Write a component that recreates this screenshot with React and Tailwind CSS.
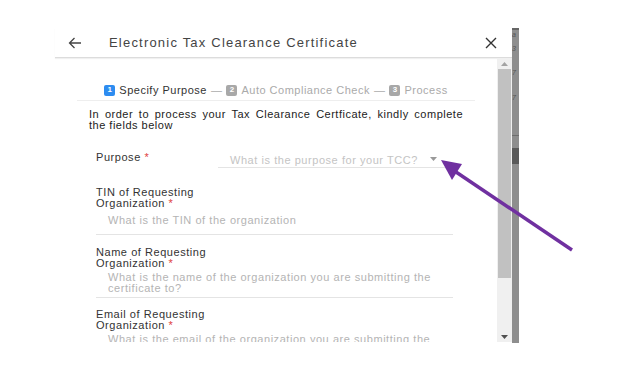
import React from "react";

const F = { fontFamily: '"Liberation Sans", Arial, sans-serif' };

function Badge({ n, active }) {
  return (
    <span
      className={`inline-flex items-center justify-center w-[11px] h-[11px] rounded-[2px] text-[8px] font-bold text-white leading-none tracking-normal ${
        active ? "bg-[#2d8cf0]" : "bg-[#a8a8a8]"
      }`}
    >
      {n}
    </span>
  );
}

function Label({ lines }) {
  return (
    <div className="text-[11px] leading-[11px] tracking-[0.55px] text-[#333]">
      {lines.map((l, i) => (
        <div key={i}>
          {l}
          {i === lines.length - 1 && <span className="text-[#e04040]"> *</span>}
        </div>
      ))}
    </div>
  );
}

export default function App() {
  return (
    <div className="relative w-[617px] h-[392px] bg-white overflow-hidden" style={F}>
      <div className="flex pl-[55px] pt-[28px]">
        <div className="w-[457px] flex flex-col">
          <div className="h-[30px] flex items-center border-b border-[#dcdcdc] shadow-[0_1px_1px_rgba(0,0,0,0.06)]">
            <svg className="ml-[13px]" width="14" height="12" viewBox="0 0 14 12">
              <path d="M13 6H1.5M6.5 1L1.5 6l5 5" fill="none" stroke="#444" strokeWidth="1.3" />
            </svg>
            <span className="ml-[27px] text-[13px] tracking-[1.2px] text-[#444]">Electronic Tax Clearance Certificate</span>
            <svg className="ml-auto mr-[15px]" width="12" height="12" viewBox="0 0 12 12">
              <path d="M1 1l10 10M11 1L1 11" stroke="#333" strokeWidth="1.4" />
            </svg>
          </div>
          <div className="flex h-[284px]">
            <div className="w-[442px] overflow-hidden">
              <div className="mx-[22px] mt-[26px] pb-[4px] border-b border-[#eeeeee] flex items-center justify-center gap-[4px] text-[11px] leading-[12px] tracking-[0.5px]">
                <Badge n="1" active />
                <span className="text-[#333]">Specify Purpose</span>
                <span className="text-[#aaa]">—</span>
                <Badge n="2" />
                <span className="text-[#aaa]">Auto Compliance Check</span>
                <span className="text-[#aaa]">—</span>
                <Badge n="3" />
                <span className="text-[#aaa]">Process</span>
              </div>
              <p className="mx-[34px] mt-[8px] text-[11px] leading-[11px] tracking-[0.5px] text-[#222] text-justify [text-align-last:left]">
                In order to process your Tax Clearance Certficate, kindly complete the fields below
              </p>
              <div className="ml-[41px] mr-[44px] mt-[20px]">
                <div className="flex">
                  <div className="w-[122px] pt-[1px]">
                    <Label lines={["Purpose"]} />
                  </div>
                  <div className="flex-1 mr-[8px] border-b border-[#e4e4e4] h-[17px] flex items-start pl-[12px] pr-[8px] text-[11px] leading-[12px] tracking-[0.55px] text-[#c4c4c4] pt-[3px]">
                    <span>What is the purpose for your TCC?</span>
                    <svg className="ml-auto mt-[3px]" width="7" height="4" viewBox="0 0 7 4">
                      <path d="M0 0h7L3.5 4z" fill="#999" />
                    </svg>
                  </div>
                </div>
                <div className="mt-[19px]">
                  <Label lines={["TIN of Requesting", "Organization"]} />
                  <div className="mt-[6px] pl-[12px] pb-[8px] border-b border-[#e4e4e4] text-[11px] leading-[11px] tracking-[0.55px] text-[#b4b4b4]">
                    What is the TIN of the organization
                  </div>
                </div>
                <div className="mt-[12px]">
                  <Label lines={["Name of Requesting", "Organization"]} />
                  <div className="mt-[3px] pl-[12px] pr-[10px] pb-[3px] border-b border-[#e4e4e4] text-[11px] leading-[11px] tracking-[0.55px] text-[#b4b4b4]">
                    What is the name of the organization you are submitting the certificate to?
                  </div>
                </div>
                <div className="mt-[11px]">
                  <Label lines={["Email of Requesting", "Organization"]} />
                  <div className="mt-[3px] pl-[12px] pr-[10px] pb-[3px] border-b border-[#e4e4e4] text-[11px] leading-[11px] tracking-[0.55px] text-[#b4b4b4]">
                    What is the email of the organization you are submitting the certificate to?
                  </div>
                </div>
              </div>
            </div>
            <div className="w-[15px] bg-[#f0f0f0] flex flex-col items-center">
              <svg className="mt-[4px]" width="7" height="4" viewBox="0 0 7 4">
                <path d="M0 4h7L3.5 0z" fill="#a3a3a3" />
              </svg>
              <div className="mt-[3px] w-[13px] h-[209px] bg-[#c1c1c1]" />
              <svg className="mt-auto mb-[3px]" width="7" height="4" viewBox="0 0 7 4">
                <path d="M0 0h7L3.5 4z" fill="#505050" />
              </svg>
            </div>
          </div>
        </div>
        <div className="w-[7px] h-[315px] bg-[#8e8e8e] flex flex-col text-[7px] leading-[8px] italic text-[#555] overflow-hidden">
          <div className="h-[2px] bg-[#666]" />
          <div className="mt-[1px]">a</div>
          <div className="mt-[6px]">3</div>
          <div className="mt-[16px]">7</div>
          <div className="mt-[17px]">7</div>
          <div className="mt-[33px] h-[1px] bg-[#6e6e6e]" />
          <div className="mt-[12px] h-[16px] bg-[#5a5a5a]" />
        </div>
      </div>
      <svg className="absolute left-0 top-0 pointer-events-none" width="617" height="392">
        <line x1="572" y1="250" x2="456" y2="172" stroke="#7030a0" strokeWidth="3.5" />
        <path d="M441 160 L462 164 L452 180 Z" fill="#7030a0" />
      </svg>
    </div>
  );
}
